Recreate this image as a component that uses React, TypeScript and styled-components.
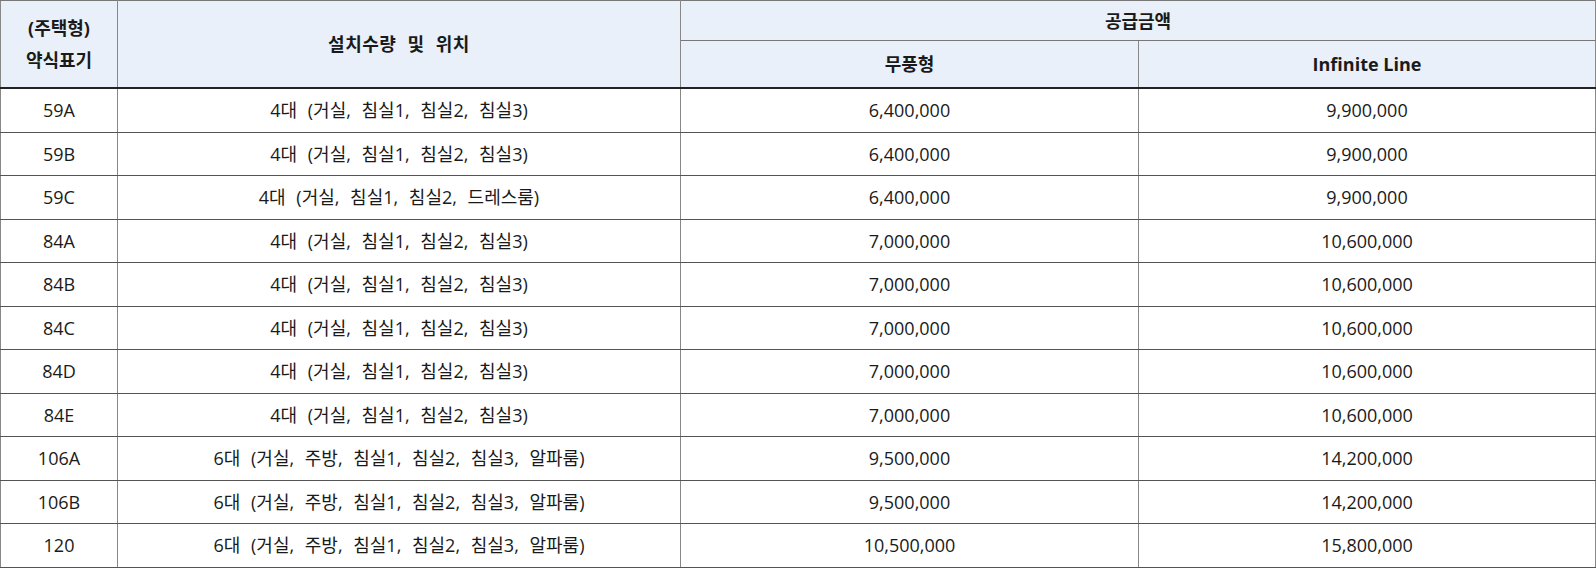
import styled, { createGlobalStyle } from "styled-components";

const GlobalStyle = createGlobalStyle`
  html, body {
    margin: 0;
    padding: 0;
    background: #fff;
  }
  body {
    font-family: "Open Sans", "Noto Sans CJK KR", sans-serif;
    color: #1a1a1a;
  }
`;

type Row = {
  type: string;
  place: string;
  mupung: string;
  infinite: string;
};

const rows: Row[] = [
  { type: "59A", place: "4대 (거실, 침실1, 침실2, 침실3)", mupung: "6,400,000", infinite: "9,900,000" },
  { type: "59B", place: "4대 (거실, 침실1, 침실2, 침실3)", mupung: "6,400,000", infinite: "9,900,000" },
  { type: "59C", place: "4대 (거실, 침실1, 침실2, 드레스룸)", mupung: "6,400,000", infinite: "9,900,000" },
  { type: "84A", place: "4대 (거실, 침실1, 침실2, 침실3)", mupung: "7,000,000", infinite: "10,600,000" },
  { type: "84B", place: "4대 (거실, 침실1, 침실2, 침실3)", mupung: "7,000,000", infinite: "10,600,000" },
  { type: "84C", place: "4대 (거실, 침실1, 침실2, 침실3)", mupung: "7,000,000", infinite: "10,600,000" },
  { type: "84D", place: "4대 (거실, 침실1, 침실2, 침실3)", mupung: "7,000,000", infinite: "10,600,000" },
  { type: "84E", place: "4대 (거실, 침실1, 침실2, 침실3)", mupung: "7,000,000", infinite: "10,600,000" },
  { type: "106A", place: "6대 (거실, 주방, 침실1, 침실2, 침실3, 알파룸)", mupung: "9,500,000", infinite: "14,200,000" },
  { type: "106B", place: "6대 (거실, 주방, 침실1, 침실2, 침실3, 알파룸)", mupung: "9,500,000", infinite: "14,200,000" },
  { type: "120", place: "6대 (거실, 주방, 침실1, 침실2, 침실3, 알파룸)", mupung: "10,500,000", infinite: "15,800,000" },
];

const App = () => {
  return (
    <>
      <GlobalStyle />
      <Table>
        <colgroup>
          <col style={{ width: 117 }} />
          <col style={{ width: 563 }} />
          <col style={{ width: 458 }} />
          <col />
        </colgroup>
        <thead>
          <tr>
            <HeadCell rowSpan={2} $stacked $last>
              (주택형)
              <br />
              약식표기
            </HeadCell>
            <HeadCell rowSpan={2} $last $wide>
              설치수량 및 위치
            </HeadCell>
            <HeadCell colSpan={2} $height={39}>
              공급금액
            </HeadCell>
          </tr>
          <tr>
            <HeadCell $height={46} $last>
              무풍형
            </HeadCell>
            <HeadCell $height={46} $last>
              Infinite Line
            </HeadCell>
          </tr>
        </thead>
        <tbody>
          {rows.map((r) => (
            <tr key={r.type}>
              <Cell>{r.type}</Cell>
              <Cell $spaced>{r.place}</Cell>
              <Cell>{r.mupung}</Cell>
              <Cell>{r.infinite}</Cell>
            </tr>
          ))}
        </tbody>
      </Table>
    </>
  );
};

export default App;

const Table = styled.table`
  width: 1596px;
  border-collapse: collapse;
  table-layout: fixed;
  border-top: 1px solid #333;
  border-left: 1px solid #555;
  border-right: 1px solid #333;
`;

const HeadCell = styled.th<{
  $height?: number;
  $stacked?: boolean;
  $last?: boolean;
  $wide?: boolean;
}>`
  height: ${(p) => (p.$height ? `${p.$height}px` : "auto")};
  padding: 0;
  background: #e9f0f9;
  border-left: 1px solid #888;
  border-right: 1px solid #888;
  border-top: 1px solid #777;
  border-bottom: ${(p) => (p.$last ? "2px solid #222" : "1px solid #777")};
  font-size: 18px;
  font-weight: 700;
  line-height: ${(p) => (p.$stacked ? "32px" : "22px")};
  word-spacing: ${(p) => (p.$wide ? "6px" : "0")};
  letter-spacing: ${(p) => (p.$wide ? "0.5px" : "0")};
  text-align: center;
  vertical-align: middle;
  color: #1a1a1a;
`;

const Cell = styled.td<{ $spaced?: boolean }>`
  height: 42.5px;
  padding: 0;
  border: 1px solid #888;
  border-top: 1px solid #555;
  border-bottom: 1px solid #555;
  font-size: 18px;
  line-height: 22px;
  word-spacing: ${(p) => (p.$spaced ? "6px" : "0")};
  text-align: center;
  vertical-align: middle;
  color: #1a1a1a;
`;
